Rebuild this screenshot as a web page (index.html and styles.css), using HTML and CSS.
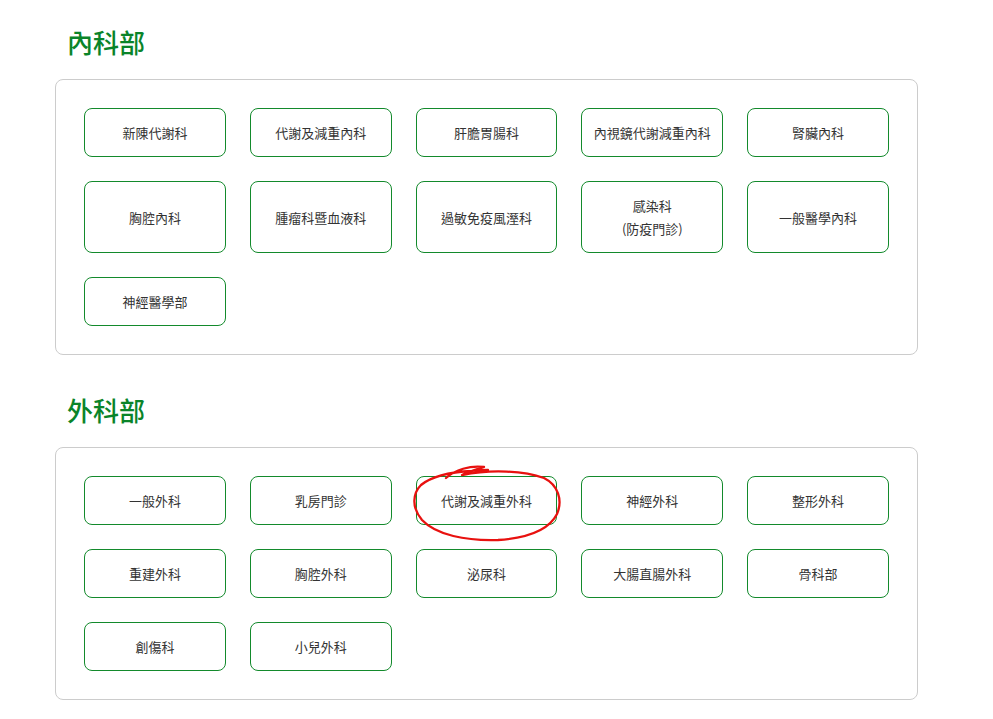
FILE: index.html
```html
<!DOCTYPE html>
<html lang="zh-Hant">
<head>
<meta charset="utf-8">
<title>科別</title>
<link rel="stylesheet" href="styles.css">
</head>
<body>
<div class="page">
  <section class="dept">
    <h2 class="dept-title">內科部</h2>
    <div class="panel">
      <a class="btn">新陳代謝科</a>
      <a class="btn">代謝及減重內科</a>
      <a class="btn">肝膽胃腸科</a>
      <a class="btn">內視鏡代謝減重內科</a>
      <a class="btn">腎臟內科</a>
      <a class="btn">胸腔內科</a>
      <a class="btn">腫瘤科暨血液科</a>
      <a class="btn">過敏免疫風溼科</a>
      <a class="btn">感染科<br>(防疫門診)</a>
      <a class="btn">一般醫學內科</a>
      <a class="btn">神經醫學部</a>
    </div>
  </section>
  <section class="dept">
    <h2 class="dept-title">外科部</h2>
    <div class="panel">
      <a class="btn">一般外科</a>
      <a class="btn">乳房門診</a>
      <a class="btn">代謝及減重外科</a>
      <a class="btn">神經外科</a>
      <a class="btn">整形外科</a>
      <a class="btn">重建外科</a>
      <a class="btn">胸腔外科</a>
      <a class="btn">泌尿科</a>
      <a class="btn">大腸直腸外科</a>
      <a class="btn">骨科部</a>
      <a class="btn">創傷科</a>
      <a class="btn">小兒外科</a>
    </div>
  </section>
</div>
<svg class="mark" width="993" height="719" viewBox="0 0 993 719">
  <path d="M446 478 C455 470 470 465 484 467 C478 469 468 472 462 475 C492 469 524 471 544 478 C558 485 563 500 557 514 C549 530 528 538 498 540 C466 541 436 535 422 520 C411 507 413 493 421 485 C432 476 452 472 472 471 C476 470 482 470 488 470" fill="none" stroke="#e8110f" stroke-width="2.3" stroke-linecap="round" stroke-linejoin="round"/>
</svg>
</body>
</html>
```
FILE: styles.css
```css
html, body {
  margin: 0;
  padding: 0;
  background: #ffffff;
}
body {
  font-family: "Noto Sans CJK TC", "Noto Sans", sans-serif;
  color: #333333;
}
.page {
  padding: 24px 0 0 55px;
  width: 863px;
  display: flex;
  flex-direction: column;
  gap: 37px;
}
.dept-title {
  margin: 0 0 19px 0;
  padding-left: 12px;
  font-size: 26px;
  line-height: 36px;
  font-weight: 500;
  color: #0a8429;
}
.panel {
  border: 1px solid #cccccc;
  border-radius: 8px;
  padding: 28px;
  display: grid;
  grid-template-columns: repeat(5, 1fr);
  gap: 24px;
}
.btn {
  display: flex;
  align-items: center;
  justify-content: center;
  text-align: center;
  border: 1px solid #138a2c;
  border-radius: 8px;
  padding: 12px 6px;
  font-size: 13px;
  line-height: 23px;
  color: #333333;
  text-decoration: none;
}
.mark {
  position: absolute;
  left: 0;
  top: 0;
  pointer-events: none;
}
```
